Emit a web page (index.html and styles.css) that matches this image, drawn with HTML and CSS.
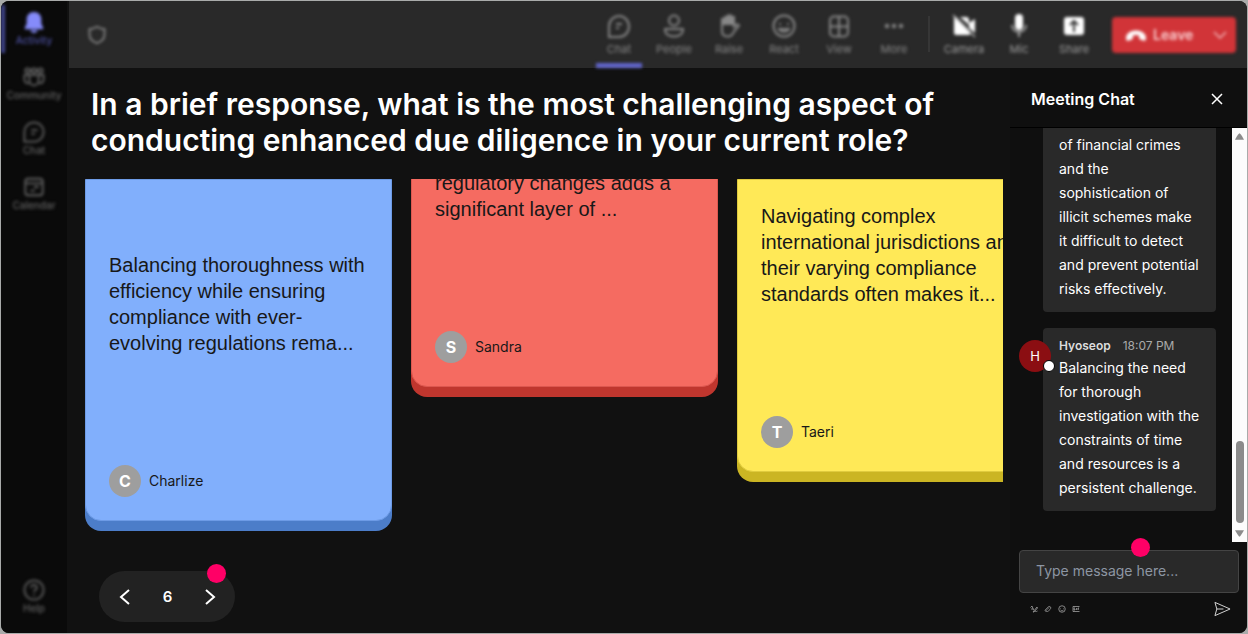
FILE: index.html
```html
<!DOCTYPE html>
<html lang="en">
<head>
<meta charset="utf-8">
<title>Meeting</title>
<link rel="stylesheet" href="styles.css">
</head>
<body>
<div class="app">
  <nav class="rail" aria-label="Main">
    <a class="rail-item active" href="#activity">
      <svg viewBox="0 0 24 24"><path fill="currentColor" d="M12 1c-5 0-8 3.600-8 8v5l-2 4v2h20v-2l-2-4V9c0-4.400-3-8-8-8zM8 21h8c-.5 2-2 3-4 3s-3.500-1-4-3z"/></svg>
      <span>Activity</span></a>
    <a class="rail-item" href="#community">
      <svg viewBox="0 0 24 24" class="line"><circle cx="5" cy="5" r="2.500"/><circle cx="12" cy="5" r="2.500"/><circle cx="19" cy="5" r="2.500"/><path d="M7 10h10v6a5 5 0 0 1-10 0zM7 10H1.500v4.500c0 3 2 4.500 5 4.500M17 10h5.500v4.500c0 3-2 4.500-5 4.500"/></svg>
      <span>Community</span></a>
    <a class="rail-item" href="#chat">
      <svg viewBox="0 0 24 24" class="line"><path d="M1.500 22.500V12A10.500 10.500 0 1 1 12 22.500zM9 10h7M9 14h4"/></svg>
      <span>Chat</span></a>
    <a class="rail-item" href="#calendar">
      <svg viewBox="0 0 24 24" class="line"><rect x="2.500" y="3" width="19" height="18" rx="3"/><path d="M3 8h18M12 12h5M8 16h5"/></svg>
      <span>Calendar</span></a>
    <a class="rail-item help" href="#help">
      <svg viewBox="0 0 24 24" class="line"><circle cx="12" cy="12" r="10.500"/><path d="M9 9.500a3 3 0 1 1 4.500 2.500c-1 .7-1.500 1-1.500 2.500M12 17v1.500"/></svg>
      <span>Help</span></a>
  </nav>

  <div class="workspace">
    <header class="topbar">
      <svg class="shield line" viewBox="0 0 24 24"><path d="M12 2c3 2 5.500 3 9 3v7c0 5-4 8-9 10-5-2-9-5-9-10V5c3.500 0 6-1 9-3z"/></svg>
      <div class="tools">
        <button class="tool current"><svg viewBox="0 0 24 24" class="line"><path d="M2 23V12A10 10.500 0 1 1 12 23zM9 10h6M9 14h3"/></svg><span>Chat</span></button>
        <button class="tool"><svg viewBox="0 0 24 24" class="line"><circle cx="12" cy="6.500" r="5"/><path d="M3 15h18c0 5-4 7.500-9 7.500S3 20 3 15z"/></svg><span>People</span></button>
        <button class="tool"><svg viewBox="0 0 24 24" class="line"><path fill="currentColor" d="M5 10V5h3V3h3V1.500h3V3h3v7z"/><path d="M5 10v7c0 4 3 5.500 6 5.500 4 0 5-3 6-5l5-6c-1.500-2-3-1-5 1V5"/></svg><span>Raise</span></button>
        <button class="tool"><svg viewBox="0 0 24 24" class="line"><circle cx="12" cy="12" r="10.500"/><path d="M8 9v2M16 9v2M7 15c2 3.500 8 3.500 10 0z"/></svg><span>React</span></button>
        <button class="tool"><svg viewBox="0 0 24 24" class="line"><rect x="3" y="2.500" width="18" height="20" rx="4"/><path d="M12 2.500v20M3 12.500h18"/></svg><span>View</span></button>
        <button class="tool"><svg viewBox="0 0 24 24"><g fill="currentColor"><circle cx="5" cy="12" r="2.200"/><circle cx="12" cy="12" r="2.200"/><circle cx="19" cy="12" r="2.200"/></g></svg><span>More</span></button>
        <i class="divider"></i>
        <button class="tool device"><svg viewBox="0 0 24 24"><path fill="#fff" d="M2 3h2l14 14v4H4q-2 0-2-2zM8 3h6q3 0 3 3v5zM17 9l6-4v14l-6-5z"/><path stroke="#bbb" stroke-width="1.500" d="M1 1l22 22"/></svg><span>Camera</span></button>
        <button class="tool device"><svg viewBox="0 0 24 24"><rect x="8" y="0" width="8" height="16" rx="4" fill="#fff"/><path fill="none" stroke="#aaa" stroke-width="2" d="M5 11c0 9 14 9 14 0M12 18v5"/></svg><span>Mic</span></button>
        <button class="tool device"><svg viewBox="0 0 24 24"><rect x="2" y="3" width="20" height="18" rx="3" fill="#fff"/><path fill="none" stroke="#333" stroke-width="2" d="M12 18V7M8 11l4-4 4 4"/></svg><span>Share</span></button>
      </div>
      <button class="leave">
        <svg class="phone" viewBox="0 0 20 12"><path fill="#fff" d="M0 9c0-10 20-10 20 0 0 3-1 3-3 2.500l-3-1c-1-.5-1-3-1-4-2-.7-4-.7-6 0 0 1 0 3.500-1 4l-3 1C1 12 0 12 0 9z"/></svg>
        <span>Leave</span>
        <svg class="caret" viewBox="0 0 14 10"><path fill="none" stroke="#f3b9bb" stroke-width="1.500" d="M1 2l6 6 6-6"/></svg>
      </button>
    </header>

    <div class="content">
      <main class="activity">
        <h1>In a brief response, what is the most challenging aspect of conducting enhanced due diligence in your current role?</h1>
        <section class="board">
          <article class="note blue">
            <p>Balancing thoroughness with efficiency while ensuring compliance with ever-evolving regulations rema...</p>
            <footer><b class="initial">C</b><span>Charlize</span></footer>
          </article>
          <article class="note red">
            <p>regulatory changes adds a significant layer of ...</p>
            <footer><b class="initial">S</b><span>Sandra</span></footer>
          </article>
          <article class="note yellow">
            <p>Navigating complex international jurisdictions and their varying compliance standards often makes it...</p>
            <footer><b class="initial">T</b><span>Taeri</span></footer>
          </article>
        </section>
        <div class="pager">
          <button aria-label="Previous"><svg viewBox="0 0 12 18"><path d="M10 2L2 9l8 7"/></svg></button>
          <span>6</span>
          <button aria-label="Next"><svg viewBox="0 0 12 18"><path d="M2 2l8 7-8 7"/></svg></button>
          <i class="hotspot"></i>
        </div>
      </main>

      <aside class="chat">
        <header class="chat-head">
          <h2>Meeting Chat</h2>
          <button aria-label="Close"><svg viewBox="0 0 12 12"><path d="M1 1l10 10M11 1L1 11"/></svg></button>
        </header>
        <div class="chat-body">
          <div class="messages">
            <article class="bubble">
              <p>of financial crimes and the sophistication of illicit schemes make it difficult to detect and prevent potential risks effectively.</p>
            </article>
            <article class="bubble">
              <div class="who">H<i></i></div>
              <div class="meta"><b>Hyoseop</b><time>18:07 PM</time></div>
              <p>Balancing the need for thorough investigation with the constraints of time and resources is a persistent challenge.</p>
            </article>
          </div>
          <div class="scroll" aria-hidden="true">
            <svg viewBox="0 0 10 7"><path d="M5 0q1 0 5 7H0Q4 0 5 0z"/></svg>
            <i></i>
            <svg viewBox="0 0 10 7"><path d="M5 7q1 0 5-7H0q4 7 5 7z"/></svg>
          </div>
        </div>
        <form class="composer">
          <div class="field">
            <input type="text" aria-label="Message" placeholder="Type message here...">
            <i class="hotspot"></i>
          </div>
          <div class="actions">
            <button type="button" aria-label="Format"><svg viewBox="0 0 16 16"><path d="M1 5l3-3 3 8M2 8h5M6 14l8-10 1 2-7 8zM10 13c2-1 3 1 5-1"/></svg></button>
            <button type="button" aria-label="Attach"><svg viewBox="0 0 16 16"><path d="M3 13c-2-2 0-4 2-6s5-5 7-4 2 4 0 6-5 5-7 4 0-3 1-4l4-4"/></svg></button>
            <button type="button" aria-label="Emoji"><svg viewBox="0 0 16 16"><circle cx="8" cy="8" r="6.500"/><path d="M5 6v1M11 6v1M5 10c2 2 4 2 6 0"/></svg></button>
            <button type="button" aria-label="GIF"><svg viewBox="0 0 16 16"><path d="M15 3H2v10h13M6 6H4v4h2V8M9 6v4M14 6h-2v4M12 8h2"/></svg></button>
            <button type="submit" class="send" aria-label="Send"><svg viewBox="0 0 18 16"><path d="M1 1l16 7-16 7 2-7zM3 8h7"/></svg></button>
          </div>
        </form>
      </aside>
    </div>
  </div>
</div>
</body>
</html>
```
FILE: styles.css
```css
* { box-sizing: border-box; }

body {
  margin: 0;
  padding: 1px;
  height: 100vh;
  background: #a9abaa;
  font-family: Inter, "Liberation Sans", sans-serif;
  color: #fff;
}

h1, h2, p { margin: 0; }

button {
  padding: 0;
  border: 0;
  background: none;
  color: inherit;
  font: inherit;
  cursor: pointer;
}

svg { display: block; }

.line {
  fill: none;
  stroke: currentColor;
  stroke-width: 2;
}

.app {
  display: flex;
  height: 100%;
  overflow: hidden;
  border-radius: 8px;
  background: #111;
}

/* Navigation rail */
.rail {
  display: flex;
  flex: none;
  flex-direction: column;
  width: 66px;
  padding: 4px 0 12px;
  background: #0a0a0a;
}

.rail-item {
  display: flex;
  flex-direction: column;
  align-items: center;
  gap: 1px;
  height: 48px;
  margin-bottom: 7px;
  padding-top: 6px;
  border-left: 4px solid transparent;
  border-right: 4px solid transparent;
  color: #626262;
  font-size: 10px;
  font-weight: 500;
  line-height: 12px;
  text-decoration: none;
}

.rail-item svg { width: 22px; height: 22px; }
.rail-item.active { border-left-color: #42468f; color: #4c50a0; }
.rail-item.active svg { color: #858bfa; }
.rail-item.help { margin: auto 0 0; }

/* Meeting toolbar */
.workspace {
  display: flex;
  flex: 1;
  flex-direction: column;
  min-width: 0;
}

.topbar {
  display: flex;
  flex: none;
  align-items: center;
  height: 67px;
  margin-left: 2px;
  padding-right: 11px;
  background: #292929;
}

/* Background controls are defocused while an activity is running */
.rail-item, .shield, .tool, .leave { filter: blur(1px) blur(1px); }

.shield { width: 20px; height: 20px; margin-left: 18px; color: #8c8c8c; }

.tools {
  display: flex;
  gap: 9px;
  height: 100%;
  margin-left: auto;
}

.tool {
  display: flex;
  flex-direction: column;
  align-items: center;
  gap: 3px;
  width: 46px;
  padding-top: 13px;
  border-bottom: 5px solid transparent;
  color: #888;
  font-size: 11px;
  line-height: 16px;
}

.tool svg { width: 24px; height: 24px; }
.tool.current { border-bottom-color: #6165cc; }
.tool.device { color: #9c9c9c; }

.divider {
  width: 2px;
  height: 36px;
  margin: 15px 2px 0;
  background: #363636;
}

.leave {
  display: flex;
  align-items: center;
  width: 124px;
  height: 36px;
  margin-left: 15px;
  padding: 0 9px 0 14px;
  border-radius: 4px;
  background: #d13438;
  color: #fbd2d4;
  font-size: 14px;
  font-weight: 600;
}

.leave .phone { width: 20px; height: 12px; margin-right: 7px; }
.leave .caret { width: 14px; height: 10px; margin-left: auto; }

/* Activity */
.content {
  display: flex;
  flex: 1;
  min-height: 0;
}

.activity {
  display: flex;
  flex: 1;
  flex-direction: column;
  min-width: 0;
  padding: 18px 7px 11px 18px;
}

h1 {
  padding: 0 60px 0 6px;
  font-size: 30px;
  font-weight: 600;
  line-height: 36px;
}

.board {
  display: flex;
  flex: 1;
  align-items: flex-start;
  gap: 19px;
  min-height: 0;
  margin-top: 21px;
  overflow: hidden;
}

.note {
  display: flex;
  flex: none;
  flex-direction: column;
  width: 307px;
  padding: 23px;
  border: 1px solid;
  border-radius: 0 0 16px 16px;
  color: #181818;
  font-size: 14px;
}

.note p {
  display: flex;
  flex-direction: column;
  justify-content: flex-end;
  min-height: 104px;
  font-family: "Liberation Sans", Arial, sans-serif;
  font-size: 20px;
  line-height: 26px;
}

.note footer {
  display: flex;
  align-items: center;
  gap: 8px;
  margin-top: 109px;
  line-height: 16px;
}

.initial {
  width: 32px;
  border-radius: 50%;
  background: #9e9e9e;
  color: #fff;
  font-size: 16px;
  line-height: 32px;
  text-align: center;
}

.blue { padding-top: 72px; border-color: #6d9be6; background: #81affc; box-shadow: 0 10px #4c7dc9; }
.red { margin-top: -85px; border-color: #dc574f; background: #f56b61; box-shadow: 0 10px #bf362e; }
.yellow { border-color: #e0cb3e; background: #ffe957; box-shadow: 0 10px #cbb523; }

.pager {
  position: relative;
  display: flex;
  align-items: center;
  justify-content: space-between;
  width: 136px;
  height: 51px;
  margin: 10px 0 0 14px;
  padding: 0 19px 0 20px;
  border-radius: 26px;
  background: #222;
  font-size: 15px;
  font-weight: 600;
}

.pager svg {
  width: 12px;
  height: 18px;
  fill: none;
  stroke: #fff;
  stroke-width: 2;
}

.hotspot {
  position: absolute;
  width: 19px;
  height: 19px;
  border-radius: 50%;
  background: #ff0066;
}

.pager .hotspot { top: -7px; right: 9px; }

/* Chat panel */
.chat {
  display: flex;
  flex: none;
  flex-direction: column;
  width: 237px;
  background: #0f0f0f;
}

.chat-head {
  display: flex;
  flex: none;
  align-items: center;
  justify-content: space-between;
  height: 60px;
  padding: 2px 24px 0 21px;
  border-bottom: 1px solid #000;
}

h2 { font-size: 16px; font-weight: 600; }

.chat-head svg {
  width: 12px;
  height: 12px;
  fill: none;
  stroke: #fff;
  stroke-width: 1.5;
}

.chat-body { display: flex; flex: 1; min-height: 0; }

.messages {
  display: flex;
  flex: 1;
  flex-direction: column;
  justify-content: flex-end;
  gap: 16px;
  padding: 0 16px 31px 33px;
  overflow: hidden;
}

.bubble {
  position: relative;
  padding: 8px 16px 11px;
  border-radius: 4px;
  background: #292929;
  font-size: 14px;
  line-height: 24px;
}

.meta {
  display: flex;
  gap: 12px;
  height: 20px;
  color: #ddd;
  font-size: 12px;
  line-height: 20px;
}

.meta b { font-weight: 600; }
.meta time { color: #aaa; }

.who {
  position: absolute;
  top: 12px;
  left: -24px;
  width: 32px;
  border-radius: 50%;
  background: #8b0e12;
  font-size: 13px;
  line-height: 32px;
  text-align: center;
}

.who i {
  position: absolute;
  right: -4px;
  bottom: 0;
  width: 12px;
  height: 12px;
  border: 1px solid #000;
  border-radius: 50%;
  background: #fff;
}

.scroll {
  display: flex;
  flex-direction: column;
  align-items: center;
  width: 15px;
  padding: 5px 0;
  background: #fcfcfc;
}

.scroll svg { width: 9px; height: 7px; fill: #8b8b8b; }

.scroll i {
  width: 8px;
  height: 82px;
  margin: auto 0 7px;
  border-radius: 4px;
  background: #8b8b8b;
}

/* Composer */
.composer { flex: none; padding: 8px 8px 16px 9px; }
.field { position: relative; }

.field input {
  display: block;
  width: 100%;
  height: 43px;
  padding: 0 16px 2px;
  border: 1px solid #444;
  border-radius: 4px;
  background: #292929;
  color: #fff;
  font: 14px Inter, sans-serif;
}

.field input::placeholder { color: #8d96a3; opacity: 1; }
.field .hotspot { top: -12px; left: 112px; }

.actions {
  display: flex;
  align-items: center;
  gap: 6px;
  margin-top: 8px;
  padding: 0 8px 0 11px;
}

.actions svg {
  width: 8px;
  height: 8px;
  fill: none;
  stroke: #aaa;
  stroke-width: 1.5;
}

.actions .send { margin-left: auto; }
.actions .send svg { width: 17px; height: 16px; stroke: #ddd; stroke-width: 1; }
```
